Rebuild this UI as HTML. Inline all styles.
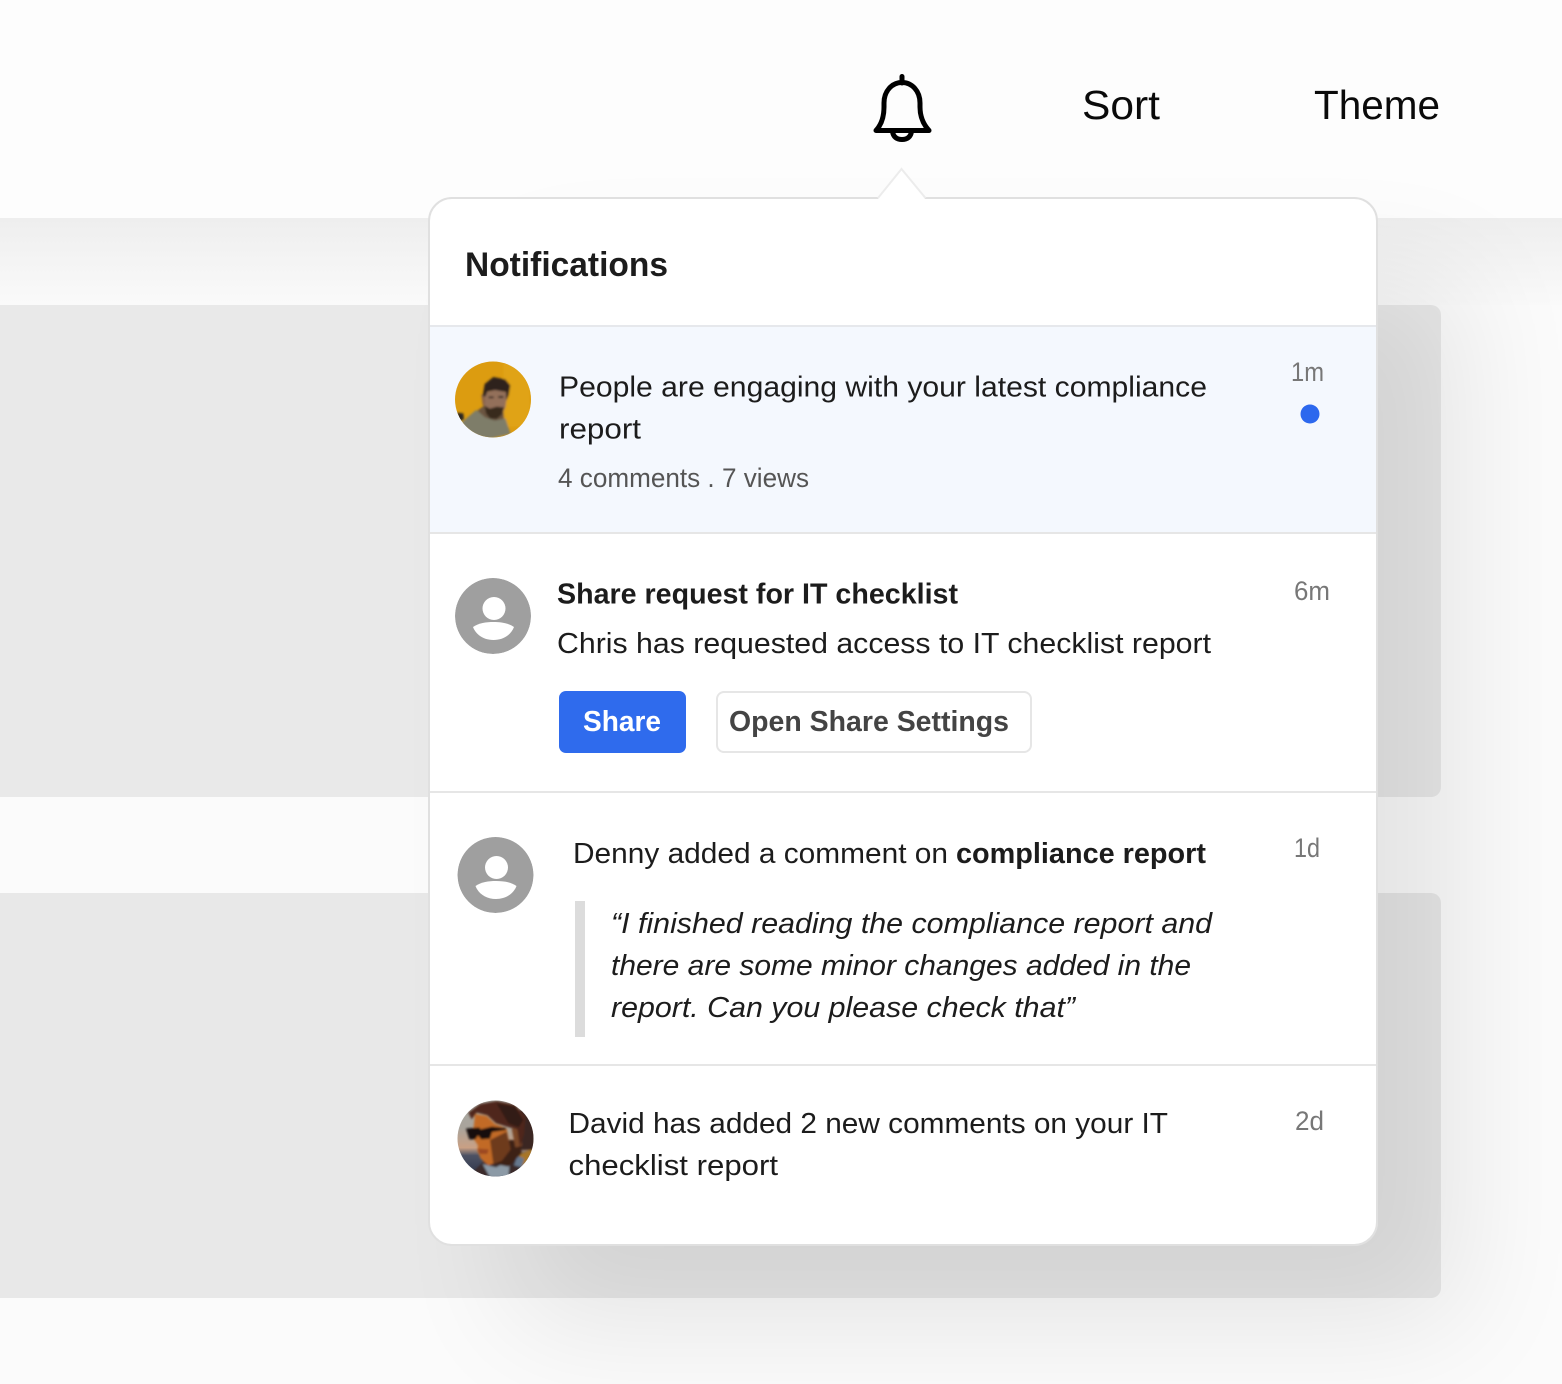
<!DOCTYPE html>
<html lang="en">
<head>
<meta charset="utf-8">
<title>Notifications</title>
<style>
html,body{margin:0;padding:0;background:#fbfbfb}
body{position:relative;width:1562px;height:1384px;overflow:hidden}
.a{position:absolute}
svg{position:absolute;left:0;top:0}
text{font-family:"Liberation Sans",Arial,sans-serif;white-space:pre}
</style>
</head>
<body>
<div class="a" style="left:0;top:0;width:1562px;height:218px;background:#fdfdfd"></div>
<div class="a" style="left:0;top:218px;width:1562px;height:87px;background:linear-gradient(#eeeeee,#fafafa)"></div>
<div class="a" style="left:-20px;top:305px;width:1461px;height:492px;background:#e9e9e9;border-radius:10px"></div>
<div class="a" style="left:-20px;top:893px;width:1461px;height:405px;background:#e8e8e8;border-radius:10px"></div>
<div class="a" style="left:428px;top:197px;width:950px;height:1049px;border-radius:24px;box-shadow:85px 80px 120px rgba(0,0,0,.09)"></div>
<div class="a" style="left:428px;top:197px;width:946px;height:1045px;background:#fff;border:2px solid #e0e0e0;border-radius:24px;overflow:hidden">
  <div class="a" style="left:0;top:126px;width:946px;height:209px;background:#f4f8fe;border-top:2px solid #e6e8ec;border-bottom:2px solid #e6e6e6;box-sizing:border-box"></div>
  <div class="a" style="left:0;top:592px;width:946px;height:2px;background:#e6e6e6"></div>
  <div class="a" style="left:0;top:865px;width:946px;height:2px;background:#e6e6e6"></div>
</div>
<div class="a" style="left:559px;top:691px;width:127px;height:62px;background:#2f6bed;border-radius:7px"></div>
<div class="a" style="left:716px;top:691px;width:312px;height:58px;background:#fff;border:2px solid #e6e6e6;border-radius:8px"></div>
<div class="a" style="left:575px;top:901px;width:10px;height:136px;background:#dcdcdc"></div>

<svg width="1562" height="1384" viewBox="0 0 1562 1384" xmlns="http://www.w3.org/2000/svg">
  <defs>
    <clipPath id="c1"><circle cx="493" cy="399.500" r="38"/></clipPath>
    <clipPath id="c2"><circle cx="495.500" cy="1138.500" r="38"/></clipPath>
    <clipPath id="c3"><circle cx="493" cy="616" r="38"/></clipPath>
    <clipPath id="c4"><circle cx="495.500" cy="875" r="38"/></clipPath>
    <filter id="b" x="-10%" y="-10%" width="120%" height="120%"><feGaussianBlur stdDeviation="3.200"/></filter>
    <linearGradient id="sky" x1="0" y1="0" x2="0" y2="1">
      <stop offset="0" stop-color="#a8a8a2"/><stop offset=".36" stop-color="#a9a49c"/><stop offset=".62" stop-color="#c9a084"/><stop offset=".72" stop-color="#4d5264"/><stop offset="1" stop-color="#2c3448"/>
    </linearGradient>
  </defs>

  <!-- arrow -->
  <path d="M878 199 L901.500 169 L925 199" fill="#fff"/>
  <path d="M878 198 L901.500 169 L925.500 198" fill="none" stroke="#ececec" stroke-width="2"/>

  <!-- bell -->
  <g fill="none" stroke="#000" stroke-width="5" stroke-linecap="round" stroke-linejoin="round">
    <path d="M902 76.500V83"/>
    <path d="M876 130.500C882 124 884 116 884 107V103C884 91 892 82.500 902 82.500C912 82.500 920 91 920 103V107C920 116 923 124 929 130.500Z"/>
    <path d="M892.500 131C893 137 897 139.500 902 139.500C907 139.500 911 137 911.500 131"/>
  </g>

  <text x="1082" y="119" font-size="41" fill="#0a0a0a" textLength="78" lengthAdjust="spacingAndGlyphs">Sort</text>
  <text x="1314" y="119" font-size="41" fill="#0a0a0a" textLength="126" lengthAdjust="spacingAndGlyphs">Theme</text>
  <text x="465" y="276" font-size="34" font-weight="700" fill="#1c1c1c" textLength="203" lengthAdjust="spacingAndGlyphs">Notifications</text>

  <!-- avatar 1 -->
  <g clip-path="url(#c1)">
    <rect x="455" y="361" width="76" height="77" fill="#dc9c10"/>
    <g transform="translate(440 350) scale(.33333)">
      <g filter="url(#b)">
        <rect x="190" y="40" width="80" height="190" fill="#e0a318"/>
        <path d="M50 188L70 190 72 208 55 215Z" fill="#2b2620"/>
        <path d="M62 220L108 180 135 198 165 208 196 205 212 252 150 266 95 256Z" fill="#7e7d69"/>
        <path d="M112 182L135 165 190 180 192 206 165 212 135 202Z" fill="#6b5440"/>
        <path d="M124 134L136 132 138 168 128 166Z" fill="#8a6448"/>
        <path d="M135 128L168 118 202 128 196 172 184 196 160 206 142 192 134 165Z" fill="#93705a"/>
        <path d="M134 168L150 176 170 170 192 172 186 194 170 207 150 206 138 190Z" fill="#38291f"/>
        <path d="M128 138L134 102 160 81 196 88 211 106 206 136 199 152 198 126 165 120 142 125 136 140Z" fill="#2d211b"/>
        <path d="M146 142h15M175 141h15" stroke="#2c201a" stroke-width="5" fill="none"/>
      </g>
    </g>
  </g>

  <!-- placeholder avatars -->
  <g clip-path="url(#c3)">
    <circle cx="493" cy="616" r="38" fill="#9f9f9f"/>
    <circle cx="494" cy="608.500" r="11.500" fill="#fff"/>
    <path d="M473 627C479 623 486 622 493.500 622C501 622 508 623 514 627C511 635 503 640 493.500 640C484 640 476 635 473 627Z" fill="#fff"/>
  </g>
  <g clip-path="url(#c4)">
    <circle cx="495.500" cy="875" r="38" fill="#9f9f9f"/>
    <circle cx="496.500" cy="867.500" r="11.500" fill="#fff"/>
    <path d="M475.500 886C481.500 882 488.500 881 496 881C503.500 881 510.500 882 516.500 886C513.500 894 505.500 899 496 899C486.500 899 478.500 894 475.500 886Z" fill="#fff"/>
  </g>

  <!-- avatar 4 -->
  <g clip-path="url(#c2)">
    <rect x="457" y="1100" width="77" height="77" fill="url(#sky)"/>
    <g transform="translate(440 1090) scale(.33333)">
      <g filter="url(#b)">
        <path d="M235 195L280 175 280 240 245 235Z" fill="#a87628"/>
        <path d="M225 60L285 60 285 180 240 180Z" fill="#3a2620"/>
        <path d="M95 250L130 215 190 210 240 200 250 262 95 265Z" fill="#3a2a2c"/>
        <path d="M128 222L168 232 210 210 205 262 150 262Z" fill="#8c9aa6"/>
        <path d="M232 198L252 205 246 232 222 226Z" fill="#66788e"/>
        <path d="M165 150L240 150 245 190 205 230 165 222Z" fill="#3d2218"/>
        <path d="M105 72L140 78 165 102 200 115 210 175 185 212 145 226 122 206 112 182 114 166 103 150 100 120Z" fill="#c26a26"/>
        <path d="M150 150L200 125 212 178 186 212 160 222Z" fill="#6e3a1c"/>
        <path d="M113 176L146 178 142 192 118 192Z" fill="#9c4a22"/>
        <path d="M215 115L244 118 246 168 226 172Z" fill="#7c4628"/>
        <path d="M85 68L120 42 170 33 225 44 256 80 252 132 240 172 232 118 208 112 168 100 142 76 110 68 95 88Z" fill="#50281a"/>
        <path d="M170 40L225 50 250 90 236 112 205 100Z" fill="#331a12"/>
        <path d="M78 116L118 112 122 118 155 110 198 114 198 120 156 126 150 146 124 148 114 136 106 148 88 148Z" fill="#15110f"/>
      </g>
    </g>
  </g>

  <!-- row 1 -->
  <text x="559" y="396.500" font-size="29" fill="#1c1c1c" textLength="648" lengthAdjust="spacingAndGlyphs">People are engaging with your latest compliance</text>
  <text x="559" y="438.500" font-size="29" fill="#1c1c1c" textLength="82" lengthAdjust="spacingAndGlyphs">report</text>
  <text x="558" y="487" font-size="27" fill="#555555" textLength="251" lengthAdjust="spacingAndGlyphs">4 comments . 7 views</text>
  <text x="1291" y="381" font-size="27" fill="#777777" textLength="33" lengthAdjust="spacingAndGlyphs">1m</text>
  <circle cx="1310" cy="414" r="9.500" fill="#2c68ee"/>

  <!-- row 2 -->
  <text x="557" y="603.500" font-size="29" font-weight="700" fill="#1c1c1c" textLength="401" lengthAdjust="spacingAndGlyphs">Share request for IT checklist</text>
  <text x="557" y="653" font-size="29" fill="#1c1c1c" textLength="654" lengthAdjust="spacingAndGlyphs">Chris has requested access to IT checklist report</text>
  <text x="1294" y="600" font-size="27" fill="#777777" textLength="36" lengthAdjust="spacingAndGlyphs">6m</text>
  <text x="583" y="731" font-size="29" font-weight="700" fill="#ffffff" textLength="78" lengthAdjust="spacingAndGlyphs">Share</text>
  <text x="729" y="731" font-size="29" font-weight="700" fill="#444444" textLength="280" lengthAdjust="spacingAndGlyphs">Open Share Settings</text>

  <!-- row 3 -->
  <text x="573" y="863" font-size="29" fill="#1c1c1c" textLength="375" lengthAdjust="spacingAndGlyphs">Denny added a comment on</text>
  <text x="956" y="863" font-size="29" font-weight="700" fill="#1c1c1c" textLength="250" lengthAdjust="spacingAndGlyphs">compliance report</text>
  <text x="1294" y="857" font-size="27" fill="#777777" textLength="26" lengthAdjust="spacingAndGlyphs">1d</text>
  <text x="611" y="933" font-size="29" font-style="italic" fill="#1c1c1c" textLength="601" lengthAdjust="spacingAndGlyphs">“I finished reading the compliance report and</text>
  <text x="611" y="975" font-size="29" font-style="italic" fill="#1c1c1c" textLength="580" lengthAdjust="spacingAndGlyphs">there are some minor changes added in the</text>
  <text x="611" y="1017" font-size="29" font-style="italic" fill="#1c1c1c" textLength="464" lengthAdjust="spacingAndGlyphs">report. Can you please check that”</text>

  <!-- row 4 -->
  <text x="568.500" y="1133" font-size="29" fill="#1c1c1c" textLength="599.500" lengthAdjust="spacingAndGlyphs">David has added 2 new comments on your IT</text>
  <text x="568.500" y="1175" font-size="29" fill="#1c1c1c" textLength="209.500" lengthAdjust="spacingAndGlyphs">checklist report</text>
  <text x="1295" y="1130" font-size="27" fill="#777777" textLength="29" lengthAdjust="spacingAndGlyphs">2d</text>
</svg>
</body>
</html>
